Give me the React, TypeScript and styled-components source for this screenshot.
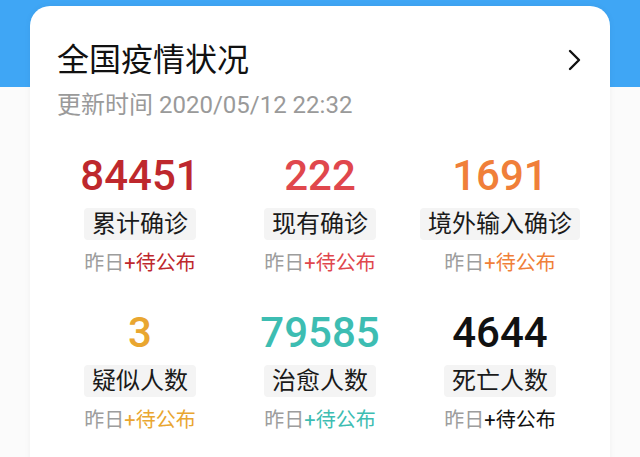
import styled, { createGlobalStyle } from "styled-components";

const GlobalStyle = createGlobalStyle`
    html, body {
        margin: 0;
        padding: 0;
        background: #fbfbfb;
    }
    body {
        font-family: Roboto, "Noto Sans CJK SC", sans-serif;
    }
`;

const Page = styled.div`
    width: 640px;
    height: 457px;
    overflow: hidden;
    box-sizing: border-box;
    padding: 6px 30px 0;
    background: linear-gradient(#3fa6f5 0, #3fa6f5 87px, #fbfbfb 87px);
`;

const Card = styled.section`
    background: #fff;
    border-radius: 20px;
    height: 520px;
    box-shadow: 0 0 6px rgba(0, 0, 0, 0.05);
    padding: 32px 20px 0;
    box-sizing: border-box;
`;

const Header = styled.header`
    display: flex;
    align-items: center;
    justify-content: space-between;
    padding: 0 8px 0 7px;
`;

const Title = styled.h2`
    margin: 0;
    font-size: 32px;
    font-weight: 400;
    line-height: 44px;
    color: #111;
`;

const Chevron = styled.svg`
    width: 14px;
    height: 22px;
`;

const Updated = styled.div`
    margin: 7px 0 0 7px;
    font-size: 24px;
    line-height: 32px;
    color: #9a9a9a;
`;

const Grid = styled.div`
    display: grid;
    grid-template-columns: repeat(3, 180px);
    row-gap: 35px;
    margin-top: 34px;
`;

const Stat = styled.div`
    display: flex;
    flex-direction: column;
    align-items: center;
`;

const Number = styled.div<{ $color: string }>`
    font-size: 42px;
    font-weight: 500;
    line-height: 42px;
    color: ${(p) => p.$color};
`;

const Label = styled.div`
    margin-top: 11px;
    padding: 0 8px;
    height: 32px;
    line-height: 32px;
    font-size: 24px;
    color: #1a1a1a;
    background: #f4f4f4;
    border-radius: 4px;
`;

const Delta = styled.div<{ $color: string }>`
    margin-top: 9px;
    font-size: 20px;
    line-height: 28px;
    color: #9d9d9d;
    span {
        color: ${(p) => p.$color};
    }
`;

const stats = [
    { value: "84451", label: "累计确诊", color: "#be282d" },
    { value: "222", label: "现有确诊", color: "#e0474d" },
    { value: "1691", label: "境外输入确诊", color: "#f07f39" },
    { value: "3", label: "疑似人数", color: "#e9a630" },
    { value: "79585", label: "治愈人数", color: "#3dbdb2" },
    { value: "4644", label: "死亡人数", color: "#111111" },
];

export default function App() {
    return (
        <>
            <GlobalStyle />
            <Page>
                <Card>
                    <Header>
                        <Title>全国疫情状况</Title>
                        <Chevron viewBox="0 0 14 22" fill="none">
                            <polyline
                                points="2,2 11,11 2,20"
                                stroke="#111"
                                strokeWidth="2.4"
                                strokeLinecap="round"
                                strokeLinejoin="round"
                            />
                        </Chevron>
                    </Header>
                    <Updated>更新时间 2020/05/12 22:32</Updated>
                    <Grid>
                        {stats.map((s) => (
                            <Stat key={s.label}>
                                <Number $color={s.color}>{s.value}</Number>
                                <Label>{s.label}</Label>
                                <Delta $color={s.color}>
                                    昨日<span>+待公布</span>
                                </Delta>
                            </Stat>
                        ))}
                    </Grid>
                </Card>
            </Page>
        </>
    );
}
